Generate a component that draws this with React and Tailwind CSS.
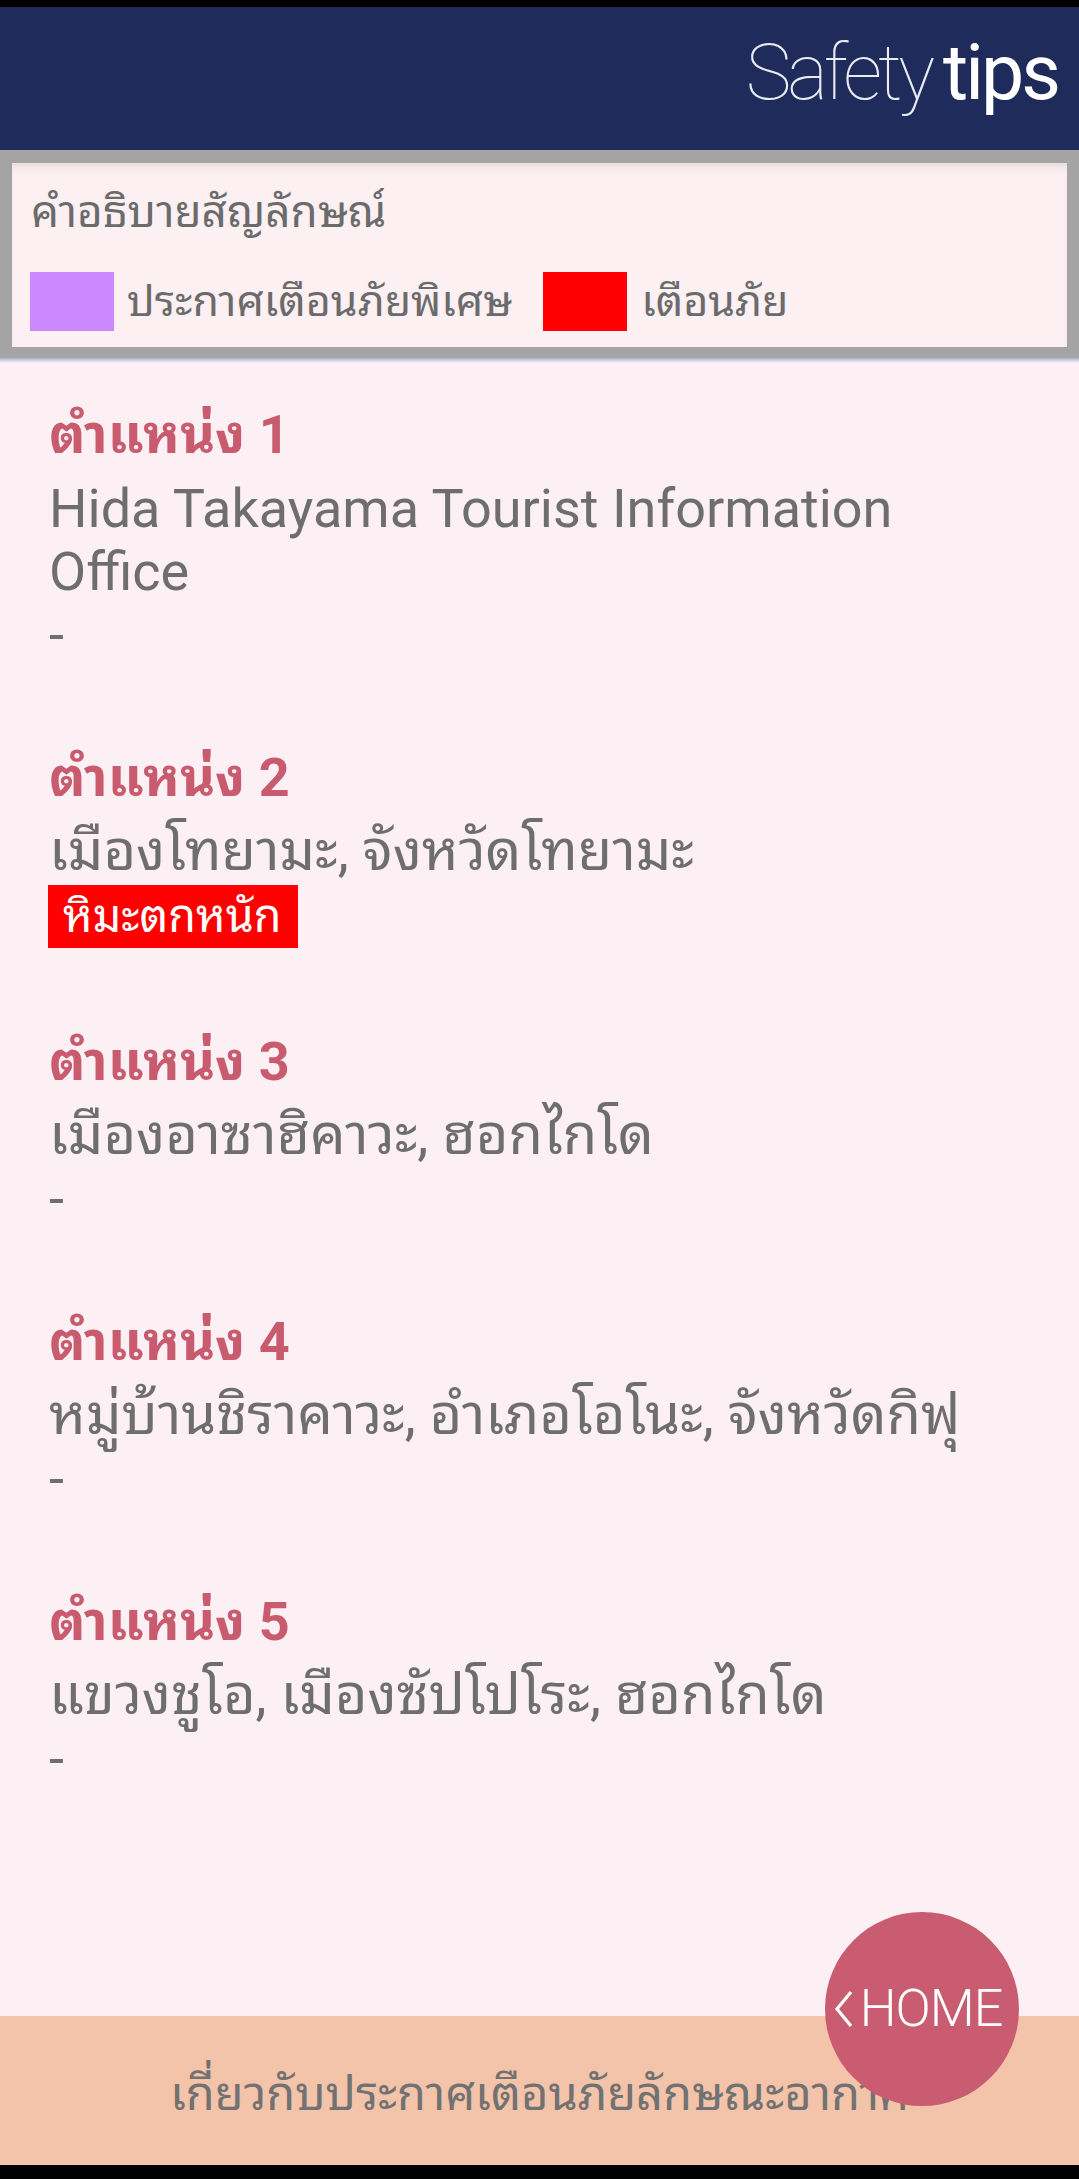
import React from "react";

const items = [
  { n: 1, body: ["Hida Takayama Tourist Information", "Office"], tag: null, thai: false },
  { n: 2, body: ["เมืองโทยามะ, จังหวัดโทยามะ"], tag: "หิมะตกหนัก", thai: true },
  { n: 3, body: ["เมืองอาซาฮิคาวะ, ฮอกไกโด"], tag: null, thai: true },
  { n: 4, body: ["หมู่บ้านชิราคาวะ, อำเภอโอโนะ, จังหวัดกิฟุ"], tag: null, thai: true },
  { n: 5, body: ["แขวงชูโอ, เมืองซัปโปโระ, ฮอกไกโด"], tag: null, thai: true },
];

export default function App() {
  return (
    <div
      className="relative w-[1079px] h-[2179px] flex flex-col overflow-hidden bg-[#fcf0f4]"
      style={{ fontFamily: 'Roboto, "Noto Sans Thai Looped", "Noto Sans Thai UI", "Noto Sans Thai", "Noto Sans", sans-serif' }}
    >
      <div className="h-[7px] bg-black shrink-0" />
      <header className="h-[143px] shrink-0 bg-[#1f2b5a] flex justify-end items-start pr-[21px] pt-[28px] leading-none text-white">
        <span className="text-[77px] font-thin tracking-[-4px] text-[#e9ebf2]">Safety</span>
        <span className="text-[77px] font-normal tracking-[-3px] ml-[12px]">tips</span>
      </header>
      <section className="shrink-0 h-[208px] bg-[#a4a4a4] px-[12px] pt-[13px] pb-[11px]">
        <div className="h-[184px] bg-[#fcf0f3] shadow-[inset_0_8px_10px_-6px_rgba(200,170,180,0.45)] pl-[19px] pt-[22px]">
          <div className="text-[44px] leading-[54px] text-[#6b6b6b]">คำอธิบายสัญลักษณ์</div>
          <div className="flex items-center mt-[33px] text-[43px] leading-[59px] text-[#6b6b6b]">
            <div className="w-[84px] h-[59px] bg-[#cc88ff] ml-[-1px]" />
            <span className="ml-[13px]">ประกาศเตือนภัยพิเศษ</span>
            <div className="w-[84px] h-[59px] bg-[#ff0000] ml-[31px]" />
            <span className="ml-[14px]">เตือนภัย</span>
          </div>
        </div>
      </section>
      <div className="h-[5px] shrink-0 bg-gradient-to-b from-[#aab0cc] to-[#fcf0f4]" />
      <main className="flex-1 px-[49px] pt-[40px]">
        {items.map((it) => (
          <div key={it.n} className="mb-[80px]">
            <div className="text-[54px] leading-[63px] font-bold text-[#c95b6f]">ตำแหน่ง {it.n}</div>
            <div className={`mt-[11px] leading-[63px] text-[#6e6e6e] ${it.thai ? "text-[56px]" : "text-[54px]"}`}>
              {it.body.map((l, i) => (
                <div key={i}>{l}</div>
              ))}
            </div>
            {it.tag ? (
              <div className="h-[67px] pt-[2px] text-[45px] leading-[63px]">
                <span className="inline-block h-[63px] bg-[#ff0000] text-white pl-[15px] pr-[17px] ml-[-1px]">{it.tag}</span>
              </div>
            ) : (
              <div className="h-[63px] text-[54px] leading-[63px] text-[#6e6e6e]">-</div>
            )}
          </div>
        ))}
      </main>
      <footer className="h-[149px] shrink-0 bg-[#f3c3aa] flex items-center justify-center pt-[8px] text-[47px] text-[#727272]">
        เกี่ยวกับประกาศเตือนภัยลักษณะอากาศ
      </footer>
      <div className="h-[14px] shrink-0 bg-black" />
      <div className="absolute left-[825px] top-[1912px] w-[194px] h-[194px] rounded-full bg-[#c95c70] flex items-center justify-center pr-[8px] text-white">
        <svg width="20" height="40" viewBox="0 0 20 40" className="mr-[6px]">
          <polyline points="17,3 3,20 17,37" fill="none" stroke="white" strokeWidth="3.2" />
        </svg>
        <span className="text-[52px] font-light leading-none tracking-[-1px]">HOME</span>
      </div>
    </div>
  );
}
